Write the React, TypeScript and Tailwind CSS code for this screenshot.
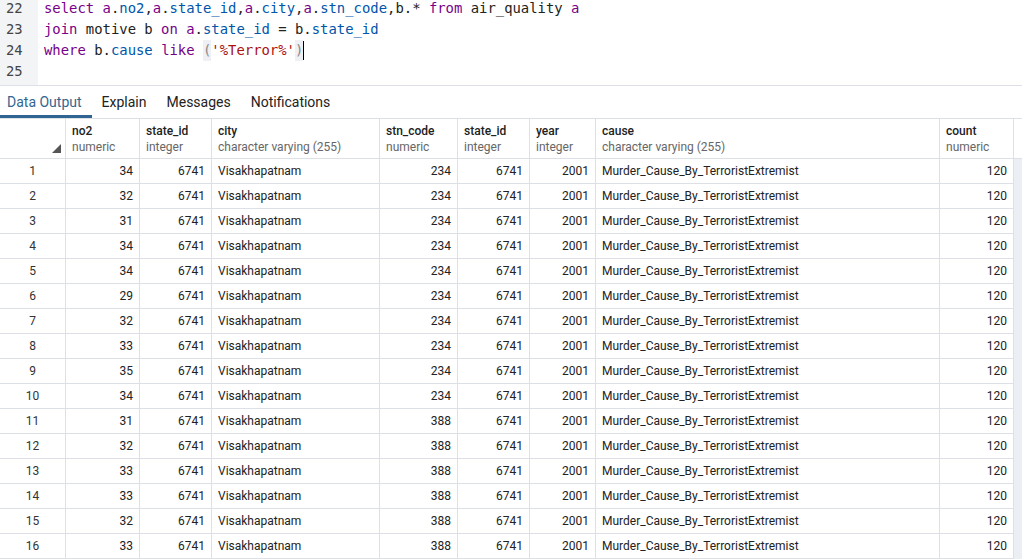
const cols = [
  { name: 'no2', type: 'numeric' },
  { name: 'state_id', type: 'integer' },
  { name: 'city', type: 'character varying (255)' },
  { name: 'stn_code', type: 'numeric' },
  { name: 'state_id', type: 'integer' },
  { name: 'year', type: 'integer' },
  { name: 'cause', type: 'character varying (255)' },
  { name: 'count', type: 'numeric' },
];

const no2s = [34, 32, 31, 34, 34, 29, 32, 33, 35, 34, 31, 32, 33, 33, 32, 33];
const rows = no2s.map((no2, i) => ({
  no2,
  stn: i < 10 ? 234 : 388,
}));

const kw = 'text-[#770088]';
const prop = 'text-[#0055aa]';
const mono = { fontFamily: '"DejaVu Sans Mono", monospace' };

function Code() {
  return (
    <div className="flex border-b border-[#dde0e6] h-[86px] overflow-hidden">
      <div className="w-[38px] bg-[#f3f4f6] text-[#444] text-[13.8px] leading-[21px] pl-[6px]" style={mono}>
        <div className="-mt-[2px]">
          <div>22</div>
          <div>23</div>
          <div>24</div>
          <div>25</div>
        </div>
      </div>
      <div className="pl-[6px] text-[13.9px] leading-[21px] text-[#222] whitespace-pre" style={mono}>
        <div className="-mt-[2px]">
          <div>
            <span className={kw}>select</span> <span className={kw}>a</span>.<span className={prop}>no2</span>,<span className={kw}>a</span>.<span className={prop}>state_id</span>,<span className={kw}>a</span>.<span className={prop}>city</span>,<span className={kw}>a</span>.<span className={prop}>stn_code</span>,b.* <span className={kw}>from</span> air_quality <span className={kw}>a</span>
          </div>
          <div>
            <span className={kw}>join</span> motive b <span className={kw}>on</span> <span className={kw}>a</span>.<span className={prop}>state_id</span> = b.<span className={prop}>state_id</span>
          </div>
          <div className="flex items-center h-[21px]">
            <span className={kw}>where</span>&nbsp;b.<span className={prop}>cause</span>&nbsp;<span className={kw}>like</span>&nbsp;<span className="bg-[#eef0f4] text-[#888]">(</span><span className="text-[#aa1111]">'%Terror%'</span><span className="bg-[#eef0f4] text-[#888]">)</span><span className="inline-block w-[1px] h-[19px] bg-black" />
          </div>
          <div>&nbsp;</div>
        </div>
      </div>
    </div>
  );
}

function Tabs() {
  const tabs = ['Data Output', 'Explain', 'Messages', 'Notifications'];
  return (
    <div className="flex h-[33px] border-b border-[#dde0e6] text-[14px] text-[#222]" style={{ fontFamily: 'Roboto, sans-serif' }}>
      {tabs.map((t, i) => (
        <div
          key={t}
          className={
            i === 0
              ? 'pl-[7px] pr-[10px] flex items-center text-[#326690] border-b-[3px] border-[#2f6592] pt-[4px]'
              : 'px-[10px] flex items-center pt-[1px]'
          }
        >
          {t}
        </div>
      ))}
    </div>
  );
}

const grid = 'grid grid-cols-[66px_74px_72px_168px_78px_72px_66px_344px_74px_8px]';
const cell = 'border-r border-b border-[#dde0e6] px-[6px] flex items-center';

function Table() {
  return (
    <div className="text-[12px] text-[#222]" style={{ fontFamily: 'Roboto, sans-serif' }}>
      <div className={`${grid} h-[40px]`}>
        <div className={`${cell} relative`}>
          <svg className="absolute right-[4px] bottom-[5px]" width="9" height="9" viewBox="0 0 9 9">
            <polygon points="9,0 9,9 0,9" fill="#555" />
          </svg>
        </div>
        {cols.map((c, i) => (
          <div key={i} className={`${cell} flex-col !items-start justify-center leading-[16px] pt-[1px]`}>
            <div className="font-medium text-[#222]">{c.name}</div>
            <div className="text-[#666]">{c.type}</div>
          </div>
        ))}
        <div className="border-b border-[#dde0e6]" />
      </div>
      {rows.map((r, i) => (
        <div key={i} className={`${grid} h-[25px]`}>
          <div className={`${cell} justify-center text-[#333]`}>{i + 1}</div>
          <div className={`${cell} justify-end`}>{r.no2}</div>
          <div className={`${cell} justify-end`}>6741</div>
          <div className={cell}>Visakhapatnam</div>
          <div className={`${cell} justify-end`}>{r.stn}</div>
          <div className={`${cell} justify-end`}>6741</div>
          <div className={`${cell} justify-end`}>2001</div>
          <div className={cell}>Murder_Cause_By_TerroristExtremist</div>
          <div className={`${cell} justify-end`}>120</div>
          <div className="bg-[#ebeef3]" />
        </div>
      ))}
    </div>
  );
}

export default function App() {
  return (
    <div className="w-[1022px] h-[559px] overflow-hidden bg-white">
      <Code />
      <Tabs />
      <Table />
    </div>
  );
}
